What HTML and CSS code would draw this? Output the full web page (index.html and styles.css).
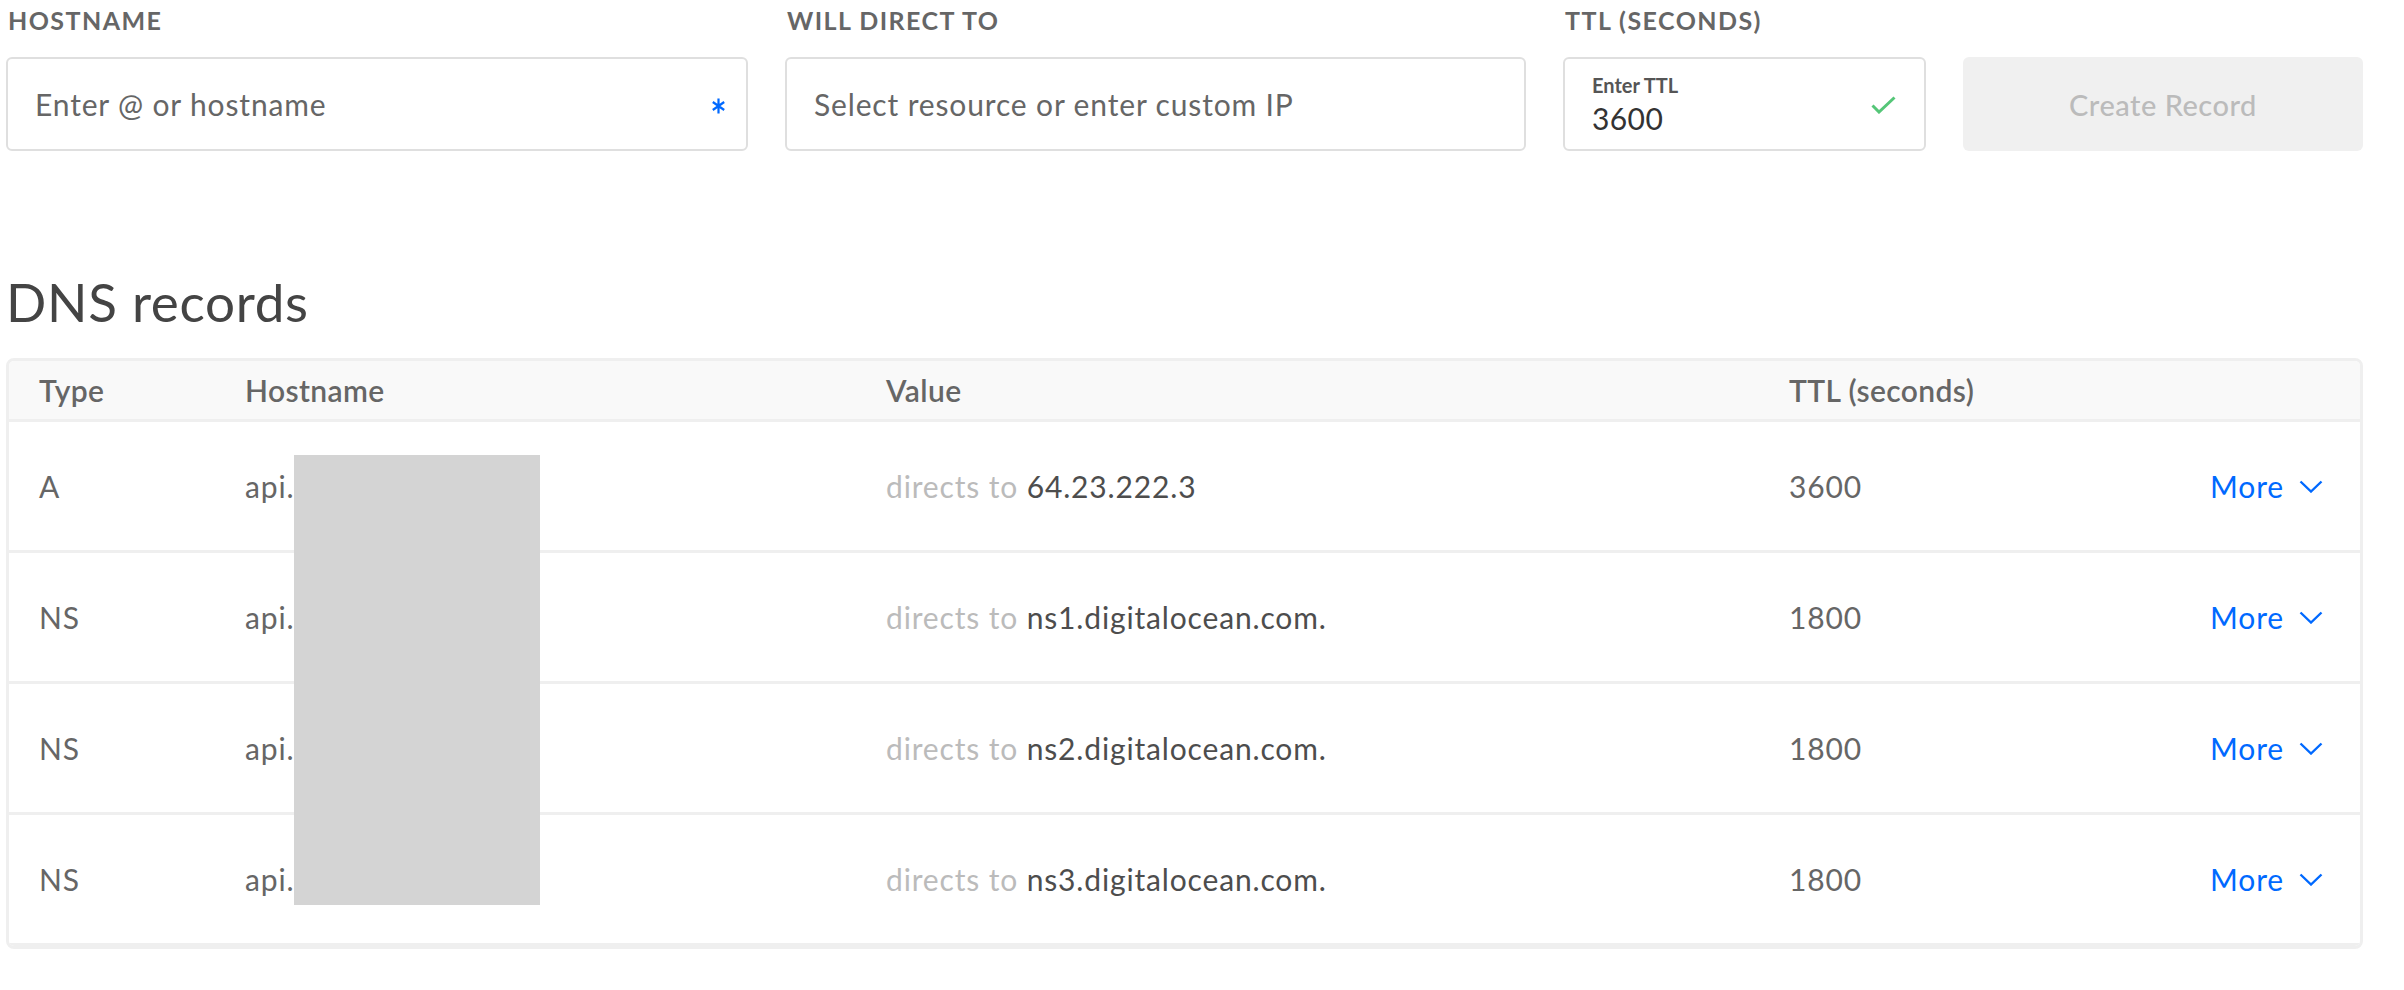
FILE: index.html
```html
<!DOCTYPE html>
<html lang="en">
<head>
    <meta charset="UTF-8">
    <meta name="viewport" content="width=device-width, initial-scale=1.0">
    <title>DNS records</title>
    <link rel="stylesheet" href="styles.css">
</head>
<body>
    <div class="page">
        <form class="record-form">
            <div class="field">
                <label class="field-label">Hostname</label>
                <div class="input-box">
                    <span class="placeholder">Enter @ or hostname</span>
                    <svg class="required" width="13" height="16" viewBox="0 0 13 16">
                        <path d="M6.5 0.5V15.5M0.8 4L12.2 12M0.8 12L12.2 4" stroke="#0069ff" stroke-width="2.2" fill="none"/>
                    </svg>
                </div>
            </div>

            <div class="field">
                <label class="field-label">Will direct to</label>
                <div class="input-box">
                    <span class="placeholder">Select resource or enter custom IP</span>
                </div>
            </div>

            <div class="field">
                <label class="field-label">TTL (seconds)</label>
                <div class="input-box ttl-box">
                    <div class="ttl-stack">
                        <span class="ttl-label">Enter TTL</span>
                        <span class="ttl-value">3600</span>
                    </div>
                    <svg class="check" width="25" height="18" viewBox="0 0 25 18">
                        <path d="M1.5 9.5L8 16L23.5 1.5" stroke="#55c678" stroke-width="3" fill="none"/>
                    </svg>
                </div>
            </div>

            <div class="field field-action">
                <button type="button" class="btn-create" disabled>Create Record</button>
            </div>
        </form>

        <h1 class="section-title">DNS records</h1>

        <div class="records">
            <div class="records-row records-head">
                <div>Type</div>
                <div>Hostname</div>
                <div>Value</div>
                <div>TTL (seconds)</div>
                <div></div>
            </div>

            <div class="records-row">
                <div>A</div>
                <div>api.</div>
                <div><span class="muted">directs to</span> <span class="target">64.23.222.3</span></div>
                <div>3600</div>
                <div class="more">More <svg width="24" height="13" viewBox="0 0 24 13"><path d="M1.5 1.5L12 11.5L22.5 1.5" stroke="#0069ff" stroke-width="2.4" fill="none"/></svg></div>
            </div>

            <div class="records-row">
                <div>NS</div>
                <div>api.</div>
                <div><span class="muted">directs to</span> <span class="target">ns1.digitalocean.com.</span></div>
                <div>1800</div>
                <div class="more">More <svg width="24" height="13" viewBox="0 0 24 13"><path d="M1.5 1.5L12 11.5L22.5 1.5" stroke="#0069ff" stroke-width="2.4" fill="none"/></svg></div>
            </div>

            <div class="records-row">
                <div>NS</div>
                <div>api.</div>
                <div><span class="muted">directs to</span> <span class="target">ns2.digitalocean.com.</span></div>
                <div>1800</div>
                <div class="more">More <svg width="24" height="13" viewBox="0 0 24 13"><path d="M1.5 1.5L12 11.5L22.5 1.5" stroke="#0069ff" stroke-width="2.4" fill="none"/></svg></div>
            </div>

            <div class="records-row">
                <div>NS</div>
                <div>api.</div>
                <div><span class="muted">directs to</span> <span class="target">ns3.digitalocean.com.</span></div>
                <div>1800</div>
                <div class="more">More <svg width="24" height="13" viewBox="0 0 24 13"><path d="M1.5 1.5L12 11.5L22.5 1.5" stroke="#0069ff" stroke-width="2.4" fill="none"/></svg></div>
            </div>

            <!-- hostnames are blanked out -->
            <div class="redacted"></div>
        </div>
    </div>
</body>
</html>
```

FILE: styles.css
```css
:root {
    --blue: #0069ff;
    --border: #efefef;
    --input-border: #dfdfdf;
    --text: #666;
}

* {
    box-sizing: border-box;
    margin: 0;
    padding: 0;
}

body {
    font-family: Lato, "Liberation Sans", sans-serif;
    background-color: #fff;
    color: var(--text);
}

.page {
    padding: 5px 41px 0 6px;
}

/* create record form */
.record-form {
    display: grid;
    grid-template-columns: 742px 741px 363px 400px;
    gap: 37px;
    align-items: end;
}

.field {
    display: flex;
    flex-direction: column;
}

.field-label {
    font-size: 25px;
    line-height: 30px;
    font-weight: 700;
    letter-spacing: 1.45px;
    text-transform: uppercase;
    color: #666;
    margin-bottom: 22px;
    padding-left: 2px;
}

.input-box {
    height: 94px;
    border: 2px solid var(--input-border);
    border-radius: 6px;
    padding: 0 21px 0 27px;
    display: flex;
    align-items: center;
    justify-content: space-between;
    font-size: 30px;
    letter-spacing: 0.85px;
}

.placeholder {
    color: #666;
}

.required {
    margin-top: 4px;
}

.ttl-box {
    padding-right: 28px;
}

.ttl-stack {
    display: flex;
    flex-direction: column;
    gap: 3px;
    padding-top: 1px;
}

.ttl-label {
    font-size: 20px;
    line-height: 24px;
    font-weight: 700;
    color: #555;
    letter-spacing: 0;
}

.ttl-value {
    font-size: 30px;
    line-height: 36px;
    color: #333;
    letter-spacing: 0.4px;
}

.check {
    margin-top: 1px;
}

.btn-create {
    height: 94px;
    border: none;
    border-radius: 6px;
    background-color: #f0f0f0;
    color: #bbb;
    font-family: inherit;
    font-size: 29px;
    font-weight: 500;
    letter-spacing: 0.5px;
}

/* records table */
.section-title {
    font-size: 53px;
    line-height: 62px;
    font-weight: 400;
    letter-spacing: 0.7px;
    color: #444;
    margin: 120px 0 25px;
}

.records {
    position: relative;
    border: 3px solid var(--border);
    border-radius: 8px;
    overflow: hidden;
}

.records-row {
    display: grid;
    grid-template-columns: 206px 641px 903px 1fr auto;
    align-items: center;
    height: 131px;
    border-bottom: 3px solid var(--border);
    font-size: 30px;
    letter-spacing: 0.85px;
}

.records-row:last-of-type {
    height: 128px;
    border-bottom: none;
}

.records-row > div {
    padding-left: 30px;
}

.records-head {
    height: 61px;
    background-color: #f9f9f9;
    font-weight: 600;
    letter-spacing: 0.4px;
}

.muted {
    color: #bbb;
}

.target {
    color: #4d4d4d;
}

.more {
    display: flex;
    align-items: center;
    gap: 15px;
    color: var(--blue);
    padding-right: 37px;
}

.more svg {
    flex-shrink: 0;
}

.redacted {
    position: absolute;
    left: 285px;
    top: 94px;
    width: 246px;
    height: 450px;
    background-color: #d4d4d4;
}
```
